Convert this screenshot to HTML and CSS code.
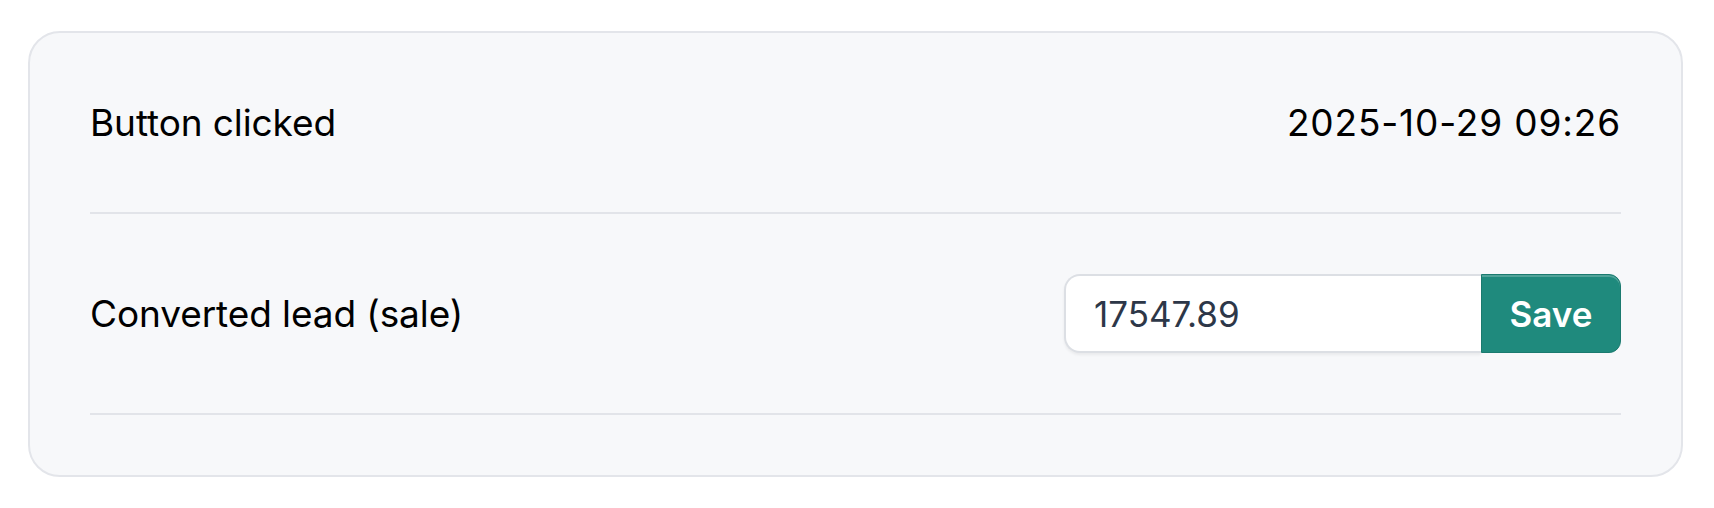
FILE: index.html
```html
<!DOCTYPE html>
<html lang="en">
<head>
<meta charset="utf-8">
<title>Events</title>
<link rel="stylesheet" href="styles.css">
</head>
<body>
<div class="page">
  <section class="card">
    <div class="row">
      <span class="label">Button clicked</span>
      <span class="time">2025-10-29 09:26</span>
    </div>
    <div class="row">
      <span class="label">Converted lead (sale)</span>
      <form class="value-form">
        <input class="value-input" type="text" value="17547.89">
        <button class="save-btn" type="button">Save</button>
      </form>
    </div>
  </section>
</div>
</body>
</html>
```

FILE: styles.css
```css
* { box-sizing: border-box; }

html, body {
  margin: 0;
  background: #ffffff;
}

body {
  font-family: Inter, "Noto Sans", "Liberation Sans", sans-serif;
  color: #000000;
}

.page {
  padding: 31px 31px 31px 28px;
}

.card {
  background: #f7f8fa;
  border: 2px solid #e3e5ea;
  border-radius: 32px;
  padding: 0 60px 60px;
}

.row {
  display: flex;
  align-items: center;
  justify-content: space-between;
  padding: 60px 0;
  border-bottom: 2px solid #e2e4e9;
}

.label,
.time {
  font-size: 37px;
  line-height: 59px;
  color: #000000;
}

.label {
  letter-spacing: -0.1px;
}

.time {
  letter-spacing: 0.85px;
}

.value-form {
  display: flex;
  margin: 0;
  height: 79px;
}

.value-input {
  width: 417px;
  height: 79px;
  margin: 0;
  border: 2px solid #dcdfe4;
  border-right: none;
  border-radius: 16px 0 0 16px;
  background: #ffffff;
  padding: 0 0 0 28px;
  font-family: Inter, "Noto Sans", "Liberation Sans", sans-serif;
  font-size: 35px;
  color: #2d3748;
  box-shadow: 0 2px 3px rgba(0, 0, 0, 0.06);
  outline: none;
}

.save-btn {
  width: 140px;
  height: 79px;
  margin: 0;
  border: 1px solid #1b7a6f;
  border-radius: 0 12px 12px 0;
  background: #1f8a7d;
  box-shadow: inset 0 2px 0 rgba(255, 255, 255, 0.22);
  color: #ffffff;
  font-family: Inter, "Noto Sans", "Liberation Sans", sans-serif;
  font-size: 35px;
  font-weight: 600;
  padding: 0;
  cursor: pointer;
}
```
